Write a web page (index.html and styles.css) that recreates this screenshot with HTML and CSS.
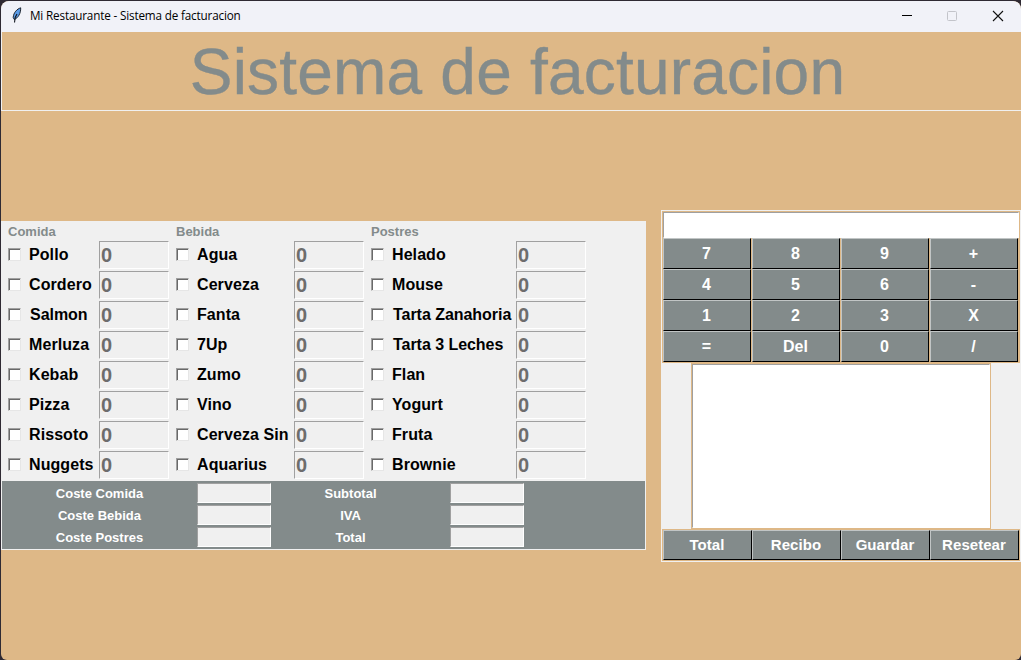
FILE: index.html
```
<!DOCTYPE html>
<html lang="es">
<head>
<meta charset="utf-8">
<title>Mi Restaurante - Sistema de facturacion</title>
<link rel="stylesheet" href="styles.css">
</head>
<body>
<div class="window">
  <header class="titlebar">
    <svg class="feather" width="12" height="17" viewBox="0 0 12 17"><path d="M9.700.8C6 2 2.500 5.500 2.200 10.500l1.100 2C7 11 9.900 6.500 9.700.8z" fill="#5b9be6" stroke="#10151d" stroke-width=".9"/><path d="M6 7 4.200 10.500 3.500 15.500" fill="none" stroke="#10151d" stroke-width="1.100"/></svg>
    <span class="caption">Mi Restaurante - Sistema de facturacion</span>
    <svg class="controls" width="104" height="12" viewBox="0 0 104 12"><path d="M1 5.500h10" stroke="#000"/><rect x="46.500" y="1.500" width="9" height="9" rx="1" fill="none" stroke="#c3c4ca"/><path d="M92 1l10 10M102 1 92 11" stroke="#111" stroke-width="1.100"/></svg>
  </header>
  <div class="banner"><h1>Sistema de facturacion</h1></div>
  <main class="content">
    <section class="left">
      <div class="menu" id="menu"></div>
      <div class="costs">
        <span class="cost-a">Coste Comida</span><i class="cost-field"></i><span class="cost-b">Subtotal</span><i class="cost-field"></i>
        <span class="cost-a">Coste Bebida</span><i class="cost-field"></i><span class="cost-b">IVA</span><i class="cost-field"></i>
        <span class="cost-a">Coste Postres</span><i class="cost-field"></i><span class="cost-b">Total</span><i class="cost-field"></i>
      </div>
    </section>
    <section class="right">
      <div class="calc">
        <div class="display"></div>
        <div class="keys">
          <b>7</b><b>8</b><b>9</b><b>+</b>
          <b>4</b><b>5</b><b>6</b><b>-</b>
          <b>1</b><b>2</b><b>3</b><b>X</b>
          <b>=</b><b>Del</b><b>0</b><b>/</b>
        </div>
      </div>
      <div class="receipt"><div class="paper"></div></div>
      <div class="actions"><b>Total</b><b>Recibo</b><b>Guardar</b><b>Resetear</b></div>
    </section>
  </main>
</div>
<script src="menu.js"></script>
</body>
</html>
```
FILE: styles.css
```
* { box-sizing: border-box; }
body { margin: 0; width: 1021px; height: 660px; overflow: hidden; background: #2f2a33; padding: 1px 0 0 1px; font-family: "Liberation Sans", Arial, sans-serif; }
.window { width: 1020px; height: 659px; background: #deb887; border-radius: 8px 8px 6px 6px; overflow: hidden; }
.titlebar { height: 31px; background: #f1f2f8; display: flex; align-items: center; padding: 0 16px 2px 10px; }
.feather { margin-right: 7px; }
.caption { font: 11.7px/16px "Open Sans", "Noto Sans", sans-serif; color: #000; flex: 1; letter-spacing: -.16px; white-space: nowrap; padding-bottom: 2px; }
.controls { flex: none; }
.banner { height: 79px; border: solid #f0f0f0; border-width: 0 0 1px 1px; display: flex; justify-content: center; padding-right: 6px; }
.banner h1 { margin: 0; font-size: 64px; line-height: 80px; height: 78px; font-weight: 400; color: #838b8b; white-space: nowrap; padding-left: 18px; letter-spacing: .2px; -webkit-text-stroke: .4px #838b8b; }
.content { display: flex; align-items: flex-start; justify-content: space-between; padding-top: 99px; }
.left { width: 645px; height: 329px; margin-top: 11px; background: #f0f0f0; border: 1px solid #f0f0f0; }
.menu { height: 259px; display: flex; padding-left: 5px; }
.group-food { width: 168px; }
.group-drink { width: 195px; }
.group-dessert { width: 222px; }
.menu h2 { margin: 0; height: 18px; font-size: 13px; line-height: 20px; font-weight: 700; color: #838b8b; padding-left: 1px; }
.item { height: 30px; display: flex; align-items: center; }
.box { width: 13px; height: 13px; margin: 0 8px 2px 1px; background: #fff; border: 1px solid; border-color: #a0a0a0 #e6e6e6 #e6e6e6 #a0a0a0; box-shadow: inset 1px 1px #696969, 0 0 0 0 #fff; }
.name { flex: 1; font-size: 16px; line-height: 20px; padding-bottom: 1px; font-weight: 700; color: #000; white-space: nowrap; letter-spacing: .08px; }
.shifted { padding-left: 1px; letter-spacing: -.04px; }
.qty { width: 70px; height: 28px; margin: 0 6px 1px 0; border: 1px solid; border-color: #a0a0a0 #fff #fff #a0a0a0; font-size: 20px; line-height: 26px; font-weight: 700; color: #6d6d6d; padding-left: 1px; }
.costs { height: 68px; background: #838b8b; display: grid; grid-template-columns: 195px 74px 179px 74px; grid-auto-rows: 22px; padding-top: 1px; font-size: 13px; font-weight: 700; color: #fff; text-align: center; line-height: 24px; }
.cost-b { padding-right: 20px; }
.cost-field { height: 20px; margin-top: 1px; background: #f0f0f0; border: 1px solid; border-color: #a0a0a0 #fff #fff #a0a0a0; }
.right { width: 360px; height: 352px; background: #f0f0f0; border: 1px solid #f0f0f0; }
.calc { height: 152px; background: #deb887; padding: 1px; }
.display { height: 26px; background: #fff; border: 1px solid; border-color: #a0a0a0 #fff #fff #a0a0a0; }
.keys { display: grid; grid-template-columns: repeat(4, 88px); grid-auto-rows: 31px; column-gap: 1px; }
.keys b, .actions b { background: #838b8b; color: #fff; border: 1px solid; border-color: #c1c5c5 #000 #000 #c1c5c5; display: flex; align-items: center; justify-content: center; font-size: 16px; padding-right: 1px; }
.receipt { width: 300px; height: 166px; margin-left: 29px; background: #deb887; padding: 1px; }
.paper { height: 164px; background: #fff; border: 1px solid; border-color: #a0a0a0 #fff #fff #a0a0a0; }
.actions { height: 32px; background: #deb887; padding: 1px; display: grid; grid-template-columns: repeat(4, 89px); }
.actions b { font-size: 15px; padding-bottom: 1px; letter-spacing: .05px; }
```
FILE: menu.js
```
const groups = [
  ["food", "Comida", ["Pollo", "Cordero", "Salmon", "Merluza", "Kebab", "Pizza", "Rissoto", "Nuggets"]],
  ["drink", "Bebida", ["Agua", "Cerveza", "Fanta", "7Up", "Zumo", "Vino", "Cerveza Sin", "Aquarius"]],
  ["dessert", "Postres", ["Helado", "Mouse", "Tarta Zanahoria", "Tarta 3 Leches", "Flan", "Yogurt", "Fruta", "Brownie"]]
];
document.getElementById("menu").innerHTML = groups.map(([key, title, items]) =>
  `<div class="group-${key}"><h2>${title}</h2>` + items.map(name =>
    `<div class="item"><span class="box"></span><span class="name${/^(Salmon|Tarta)/.test(name) ? " shifted" : ""}">${name}</span><span class="qty">0</span></div>`
  ).join("") + "</div>").join("");
```
